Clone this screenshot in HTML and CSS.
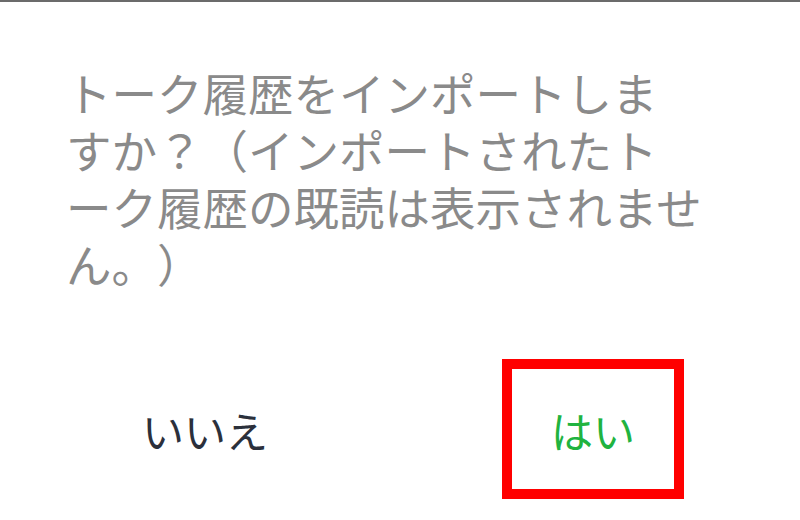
FILE: index.html
```html
<!DOCTYPE html>
<html lang="ja">
<head>
    <meta charset="UTF-8">
    <meta name="viewport" content="width=device-width, initial-scale=1.0">
    <title>トーク履歴のインポート</title>
    <link rel="stylesheet" href="styles.css">
</head>
<body>
    <div class="dialog">
        <p class="message">
            トーク履歴をインポートしま<br>すか？（インポートされたト<br>ーク履歴の既読は表示されませ<br>ん。）
        </p>
        <div class="actions">
            <button class="btn btn-no">いいえ</button>
            <button class="btn btn-yes">はい</button>
        </div>
    </div>
</body>
</html>
```

FILE: styles.css
```css
body {
    margin: 0;
    background-color: #ffffff;
    font-family: "Noto Sans CJK JP", "Noto Sans", sans-serif;
}
.dialog {
    border-top: 2px solid #6b6b6b;
    height: 518px;
}
.message {
    margin: 0;
    padding: 62px 0 0 66px;
    font-size: 45.5px;
    line-height: 57px;
    color: #8a8a8a;
    /* keep full-width punctuation at full width */
    text-spacing-trim: space-all;
}
.actions {
    display: flex;
    align-items: center;
    gap: 206px;
    padding: 67px 0 0 114px;
}
.btn {
    width: 182px;
    height: 140px;
    background: none;
    border: none;
    font-family: inherit;
    font-size: 42px;
    cursor: pointer;
}
.btn-no {
    color: #2b303b;
}
.btn-yes {
    color: #20b33f;
    border: 10px solid #ff0000;
}
```
